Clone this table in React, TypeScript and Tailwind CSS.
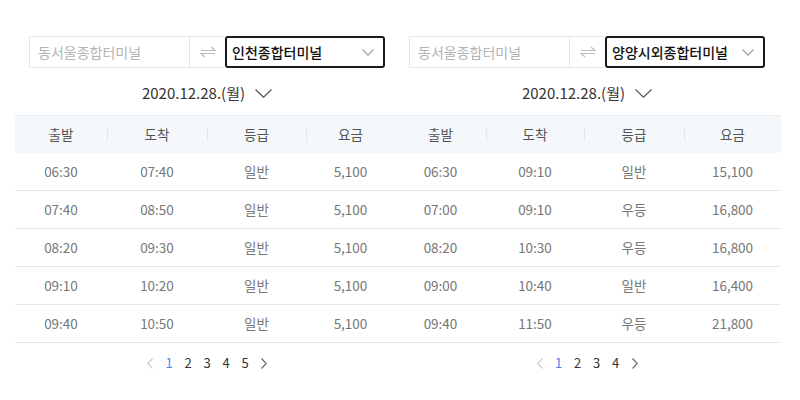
import React from "react";

const font = { fontFamily: '"Noto Sans CJK KR", "Noto Sans", sans-serif' };

type Row = [string, string, string, string];

const leftRows: Row[] = [
  ["06:30", "07:40", "일반", "5,100"],
  ["07:40", "08:50", "일반", "5,100"],
  ["08:20", "09:30", "일반", "5,100"],
  ["09:10", "10:20", "일반", "5,100"],
  ["09:40", "10:50", "일반", "5,100"],
];

const rightRows: Row[] = [
  ["06:30", "09:10", "일반", "15,100"],
  ["07:00", "09:10", "우등", "16,800"],
  ["08:20", "10:30", "우등", "16,800"],
  ["09:00", "10:40", "일반", "16,400"],
  ["09:40", "11:50", "우등", "21,800"],
];

function SwapIcon() {
  return (
    <svg width="16" height="12" viewBox="0 0 16 12" fill="none" stroke="#bdbdbd" strokeWidth="1.2">
      <path d="M1 4.5 H15 L11 1" />
      <path d="M15 7.5 H1 L5 11" />
    </svg>
  );
}

function Chevron({ w, h, color }: { w: number; h: number; color: string }) {
  return (
    <svg width={w} height={h} viewBox={`0 0 ${w} ${h}`} fill="none" stroke={color} strokeWidth="1.2">
      <path d={`M0.5 0.5 L${w / 2} ${h - 0.8} L${w - 0.5} 0.5`} />
    </svg>
  );
}

function PageArrow({ dir, color }: { dir: "l" | "r"; color: string }) {
  return (
    <span className="w-[9px] flex justify-center">
      <svg width="6" height="11" viewBox="0 0 6 11" fill="none" stroke={color} strokeWidth="1.1">
        <path d={dir === "l" ? "M5.5 0.5 L0.8 5.5 L5.5 10.5" : "M0.5 0.5 L5.2 5.5 L0.5 10.5"} />
      </svg>
    </span>
  );
}

function Panel({
  dest,
  rows,
  cols,
  pages,
}: {
  dest: string;
  rows: Row[];
  cols: string;
  pages: number;
}) {
  return (
    <div className="flex flex-col">
      <div className="pl-[14px]">
        <div className="w-[356px] flex flex-col">
          <div className="flex h-[32px]">
            <div className="w-[161px] h-full border border-[#e6e6e6] flex items-center pl-[8px] text-[14px] text-[#b3b3b3]">
              동서울종합터미널
            </div>
            <div className="flex-1 h-full border-y border-[#e6e6e6] flex items-center justify-center">
              <SwapIcon />
            </div>
            <div className="w-[160px] h-full border-2 border-[#1a1a1a] rounded-[3px] flex items-center justify-between pl-[5px] pr-[9px]">
              <span className="text-[14px] font-medium text-[#111]">{dest}</span>
              <Chevron w={12} h={7} color="#a0a0a0" />
            </div>
          </div>
          <div className="mt-[13px] h-[24px] flex items-center justify-center gap-[10px]">
            <span className="text-[15px] text-[#333]">2020.12.28.(월)</span>
            <Chevron w={17} h={9} color="#555" />
          </div>
        </div>
      </div>
      <div className="mt-[10px] border-t border-[#e8edf2]">
        <div className={`grid ${cols} h-[37px] bg-[#f5f8fb] items-center text-[13.5px] text-[#555]`}>
          {["출발", "도착", "등급", "요금"].map((h, i) => (
            <div key={h} className="relative text-center">
              {h}
              {i > 0 && (
                <span className="absolute left-0 top-1/2 -translate-y-1/2 w-px h-[13px] bg-[#e2e6ea]" />
              )}
            </div>
          ))}
        </div>
        {rows.map((r, ri) => (
          <div
            key={ri}
            className={`grid ${cols} h-[38px] border-b border-[#e9e9e9] items-center text-[13.5px] text-[#777]`}
          >
            {r.map((c, ci) => (
              <div key={ci} className="text-center">
                {c}
              </div>
            ))}
          </div>
        ))}
      </div>
      <div className="pl-[14px]">
        <div className="w-[356px] mt-[10px] h-[20px] flex items-center justify-center gap-[10px] text-[13px] text-[#333]">
          <PageArrow dir="l" color="#c8c8c8" />
          {Array.from({ length: pages }, (_, i) => (
            <span key={i} className={`w-[9px] text-center ${i === 0 ? "text-[#3b8be6]" : ""}`}>
              {i + 1}
            </span>
          ))}
          <PageArrow dir="r" color="#666" />
        </div>
      </div>
    </div>
  );
}

export default function App() {
  return (
    <div className="w-[800px] h-[400px] bg-white overflow-hidden" style={font}>
      <div className="pt-[36px] pl-[15px] flex">
        <div className="w-[380px]">
          <Panel dest="인천종합터미널" rows={leftRows} cols="grid-cols-[92px_100px_99px_89px]" pages={5} />
        </div>
        <div className="w-[386px]">
          <Panel dest="양양시외종합터미널" rows={rightRows} cols="grid-cols-[91px_98px_100px_97px]" pages={4} />
        </div>
      </div>
    </div>
  );
}
